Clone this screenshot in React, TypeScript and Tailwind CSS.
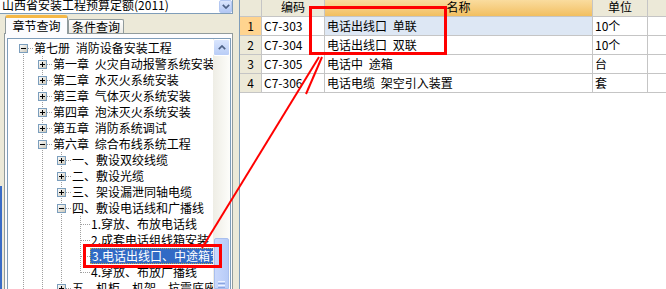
import React from "react";

type TreeRow = {
  level: number;
  exp?: "open" | "closed";
  text: string;
  last?: boolean;
  selected?: boolean;
};

const treeRows: TreeRow[] = [
  { level: 0, exp: "open", text: "第七册 消防设备安装工程" },
  { level: 1, exp: "closed", text: "第一章 火灾自动报警系统安装" },
  { level: 1, exp: "closed", text: "第二章 水灭火系统安装" },
  { level: 1, exp: "closed", text: "第三章 气体灭火系统安装" },
  { level: 1, exp: "closed", text: "第四章 泡沫灭火系统安装" },
  { level: 1, exp: "closed", text: "第五章 消防系统调试" },
  { level: 1, exp: "open", text: "第六章 综合布线系统工程" },
  { level: 2, exp: "closed", text: "一、敷设双绞线缆" },
  { level: 2, exp: "closed", text: "二、敷设光缆" },
  { level: 2, exp: "closed", text: "三、架设漏泄同轴电缆" },
  { level: 2, exp: "open", text: "四、敷设电话线和广播线" },
  { level: 3, text: "1.穿放、布放电话线" },
  { level: 3, text: "2.成套电话组线箱安装" },
  { level: 3, text: "3.电话出线口、中途箱安装", selected: true },
  { level: 3, text: "4.穿放、布放广播线", last: true },
  { level: 2, exp: "closed", text: "五、机柜、机架、抗震底座" },
];

const items = [
  { no: "1", code: "C7-303", name: "电话出线口 单联", unit: "10个" },
  { no: "2", code: "C7-304", name: "电话出线口 双联", unit: "10个" },
  { no: "3", code: "C7-305", name: "电话中 途箱", unit: "台" },
  { no: "4", code: "C7-306", name: "电话电缆 架空引入装置", unit: "套" },
];

// one 19x16 indent cell of the tree: dotted guide lines + expander box
const Gutter = ({
  kind,
  exp,
}: {
  kind: "pass" | "own" | "last" | "root";
  exp?: "open" | "closed";
}) => (
  <svg width="19" height="16" className="block shrink-0">
    <g stroke="#a0a0a0" strokeDasharray="1 1" fill="none">
      {kind === "pass" && <path d="M9.5 0V16" />}
      {kind === "own" && <path d="M9.5 0V16" />}
      {kind === "last" && <path d="M9.5 0V9" />}
      {kind === "root" && <path d="M9.5 8V16" />}
      {kind !== "pass" && <path d="M10 8.5H19" />}
    </g>
    {exp && (
      <g>
        <defs>
          <linearGradient id="expg" x1="0" y1="0" x2="1" y2="1">
            <stop offset="0" stopColor="#ffffff" />
            <stop offset="1" stopColor="#c9c5b6" />
          </linearGradient>
        </defs>
        <rect x="5.5" y="4.5" width="8" height="8" fill="url(#expg)" stroke="#7b9ebd" />
        <path d="M7 8.5H12" stroke="#000" />
        {exp === "closed" && <path d="M9.5 6V11" stroke="#000" />}
      </g>
    )}
  </svg>
);

const Chevron = ({ up }: { up?: boolean }) => (
  <svg width="8" height="5" viewBox="0 0 8 5">
    <path
      d={up ? "M0.8 4.2 4 1 7.2 4.2" : "M0.8 0.8 4 4 7.2 0.8"}
      fill="none"
      stroke="#4d6185"
      strokeWidth="1.7"
    />
  </svg>
);

const Tree = () => (
  <div className="flex h-full border border-b-0 border-[#7f9db9] bg-white">
    <div className="flex-1 overflow-hidden pl-[6px] pt-[1px]">
      {treeRows.map((row, i) => (
        <div key={i} className="flex h-[16px] items-center whitespace-nowrap">
          {Array.from({ length: row.level }).map((_, c) => (
            <Gutter key={c} kind="pass" />
          ))}
          <Gutter
            kind={row.level === 0 ? "root" : row.last ? "last" : "own"}
            exp={row.exp}
          />
          {row.selected ? (
            <span className="h-[16px] border border-dotted border-[#c4a24e] bg-[#316ac5] px-[1px] leading-[14px] text-white">
              {row.text}
            </span>
          ) : (
            <span className="pl-[1px] leading-[16px]">{row.text}</span>
          )}
        </div>
      ))}
    </div>
    <div className="flex w-[17px] shrink-0 flex-col bg-linear-to-r from-[#eeede5] to-[#fdfdfa]">
      <div className="flex h-[17px] items-center justify-center rounded-[2px] border border-white bg-linear-to-b from-[#d9e5fd] to-[#b9cdf6]">
        <Chevron up />
      </div>
      <div className="h-[182px]" />
      <div className="mx-[1px] flex flex-1 flex-col items-center rounded-t-[2px] border border-[#a9bfee] bg-linear-to-r from-[#c9d8fc] to-[#b7cbf7] pt-[42px]">
        <div className="flex flex-col gap-[1px]">
          <div className="h-px w-[7px] bg-[#eef3fe]" />
          <div className="h-px w-[7px] bg-[#8ca6e0]" />
          <div className="h-px w-[7px] bg-[#eef3fe]" />
          <div className="h-px w-[7px] bg-[#8ca6e0]" />
        </div>
      </div>
    </div>
  </div>
);

const LeftPanel = () => (
  <div className="flex h-[289px] w-[233px] shrink-0 flex-col">
    <div className="flex h-[14px] shrink-0 border-b border-r border-[#7f9db9] bg-white">
      <div className="-mt-[2px] flex-1 overflow-hidden whitespace-nowrap pl-[2px] leading-[14px]">
        山西省安装工程预算定额(2011)
      </div>
      <div className="flex w-[13px] items-center justify-center rounded-[2px] border border-[#b4c8f2] bg-linear-to-b from-[#dbe6fd] to-[#b2c7f4]">
        <Chevron />
      </div>
    </div>
    <div className="relative z-10 mt-[1px] flex h-[18px] shrink-0 items-end pl-[5px]">
      <div className="-mb-px h-[19px] w-[63px] rounded-t-[3px] border-x border-t-[3px] border-[#919b9c] border-t-[#f5b846] bg-[#fcfcfe] text-center leading-[15px]">
        章节查询
      </div>
      <div className="h-[14px] w-[56px] rounded-t-[2px] border border-b-0 border-[#919b9c] bg-linear-to-b from-white to-[#ecebe5] text-center leading-[14px]">
        条件查询
      </div>
    </div>
    <div className="ml-[4px] flex-1 overflow-hidden border border-b-0 border-[#919b9c] bg-[#fcfcfe] pl-[2px] pr-[1px] pt-[4px]">
      <Tree />
    </div>
  </div>
);

const Grid = () => (
  <div className="flex-1 border-l border-[#7f9db9] bg-white">
    <div className="flex h-[17px] border-b border-[#c5c5c5] leading-[13px]">
      <div className="w-[22px] border-r border-[#c5c5c5] bg-[#ece9d8]" />
      <div className="w-[63px] border-r border-[#c5c5c5] bg-[#ece9d8] text-center">编码</div>
      <div className="w-[268px] border-r border-[#c5c5c5] bg-linear-to-b from-[#fadc9e] to-[#f2bf5f] text-center">
        名称
      </div>
      <div className="w-[55px] border-r border-[#c5c5c5] bg-[#ece9d8] text-center">单位</div>
      <div className="flex-1 bg-[#ece9d8]" />
    </div>
    {items.map((it, i) => (
      <div key={it.no} className="flex h-[19px] border-b border-[#c5c5c5] leading-[18px]">
        <div
          className={`w-[22px] border-r border-[#c5c5c5] text-center ${
            i === 0 ? "bg-[#ffd48f]" : "bg-[#ece9d8]"
          }`}
        >
          {it.no}
        </div>
        <div className="w-[63px] border-r border-[#c5c5c5] pl-[2px]">{it.code}</div>
        <div
          className={`w-[268px] whitespace-nowrap border-r border-[#c5c5c5] pl-[2px] ${
            i === 0 ? "bg-[#dde7f4]" : ""
          }`}
        >
          {it.name}
        </div>
        <div className="w-[55px] border-r border-[#c5c5c5] pl-[2px]">{it.unit}</div>
        <div className="flex-1" />
      </div>
    ))}
  </div>
);

// red annotation drawn over the screenshot
const Overlay = () => (
  <svg className="pointer-events-none absolute left-0 top-0" width="666" height="289">
    <rect x="0" y="186" width="2" height="103" fill="#3a6cc6" />
    <rect x="84.5" y="245.5" width="136" height="21" fill="none" stroke="#ff0000" strokeWidth="3" />
    <rect x="310.5" y="7.5" width="135" height="46" fill="none" stroke="#ff0000" strokeWidth="3" />
    <path d="M319 57 202 248" stroke="#ff0000" strokeWidth="2" />
    <path d="M322 57 306 94" stroke="#ff0000" strokeWidth="2" />
  </svg>
);

export default function App() {
  return (
    <div className="relative flex h-[289px] w-[666px] overflow-hidden bg-[#ece9d8] font-['Noto_Sans_CJK_SC',sans-serif] text-[12px] text-black [word-spacing:3px]">
      <LeftPanel />
      <div className="w-[6px] shrink-0 bg-[#ece9d8]" />
      <Grid />
      <Overlay />
    </div>
  );
}
